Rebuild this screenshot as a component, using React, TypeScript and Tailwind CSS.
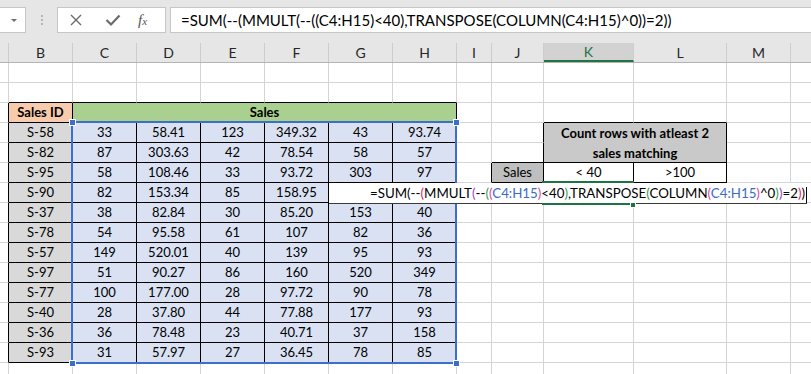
import React from "react"

const FONT = { fontFamily: "Lato, 'Open Sans', sans-serif" }

const COL_LETTERS = ["", "B", "C", "D", "E", "F", "G", "H", "I", "J", "K", "L", "M", ""]
const COL_WIDTHS = [9, 64, 64, 64, 64, 64, 64, 64, 35, 52, 90, 93, 64, 40]

// Sales data, rows 4-15 (C..H)
const SALES: [string, string[]][] = [
  ["S-58", ["33", "58.41", "123", "349.32", "43", "93.74"]],
  ["S-82", ["87", "303.63", "42", "78.54", "58", "57"]],
  ["S-95", ["58", "108.46", "33", "93.72", "303", "97"]],
  ["S-90", ["82", "153.34", "85", "158.95", "", ""]],
  ["S-37", ["38", "82.84", "30", "85.20", "153", "40"]],
  ["S-78", ["54", "95.58", "61", "107", "82", "36"]],
  ["S-57", ["149", "520.01", "40", "139", "95", "93"]],
  ["S-97", ["51", "90.27", "86", "160", "520", "349"]],
  ["S-77", ["100", "177.00", "28", "97.72", "90", "78"]],
  ["S-40", ["28", "37.80", "44", "77.88", "177", "93"]],
  ["S-36", ["36", "78.48", "23", "40.71", "37", "158"]],
  ["S-93", ["31", "57.97", "27", "36.45", "78", "85"]],
]

const ROWS = 16
const NCOLS = COL_WIDTHS.length

// cells with black border
function boxed(r: number, c: number) {
  if (r >= 3 && r <= 15 && c >= 1 && c <= 7) return true
  if (r >= 4 && r <= 5 && c >= 10 && c <= 11) return true
  if (r === 6 && c >= 9 && c <= 11) return true
  return false
}

// cells hidden under a merged cell
function covered(r: number, c: number) {
  if (r === 3 && c >= 3 && c <= 7) return true
  if (r === 4 && c === 11) return true
  if (r === 5 && (c === 10 || c === 11)) return true
  return false
}

type Cell = { text?: React.ReactNode; bg?: string; bold?: boolean; span?: string }

function cellInfo(r: number, c: number): Cell {
  if (r === 3 && c === 1) return { text: "Sales ID", bg: "bg-[#f8cbad]", bold: true }
  if (r === 3 && c === 2) return { text: "Sales", bg: "bg-[#a9d08e]", bold: true, span: "col-span-6" }
  if (r >= 4 && r <= 15 && c === 1) return { text: SALES[r - 4][0], bg: "bg-[#d9d9d9]" }
  if (r >= 4 && r <= 15 && c >= 2 && c <= 7) return { text: SALES[r - 4][1][c - 2], bg: "bg-[#d9e1f2]" }
  if (r === 4 && c === 10)
    return {
      text: (
        <span className="leading-[20px] text-center">
          Count rows with atleast 2
          <br />
          sales matching
        </span>
      ),
      bg: "bg-[#c9c9c9]",
      bold: true,
      span: "col-span-2 row-span-2",
    }
  if (r === 6 && c === 9) return { text: "Sales", bg: "bg-[#bfbfbf]" }
  if (r === 6 && c === 10) return { text: "< 40", bg: "bg-white" }
  if (r === 6 && c === 11) return { text: ">100", bg: "bg-white" }
  return { bg: "bg-white" }
}

const K = "#000000"
const RED = "#e0245e"
const PURPLE = "#9a3fc0"
const GREEN = "#2ea04a"
const MAGENTA = "#dd3fae"
const BLUE = "#3a6ac8"

const EDIT_PARTS: [string, string][] = [
  ["=SUM(--", K],
  ["(", RED],
  ["MMULT", K],
  ["(", PURPLE],
  ["--", K],
  ["(", GREEN],
  ["(", MAGENTA],
  ["C4:H15", BLUE],
  [")", MAGENTA],
  ["<40", K],
  [")", GREEN],
  [",TRANSPOSE", K],
  ["(", GREEN],
  ["COLUMN", K],
  ["(", MAGENTA],
  ["C4:H15", BLUE],
  [")", MAGENTA],
  ["^0", K],
  [")", GREEN],
  [")", PURPLE],
  ["=2", K],
  [")", RED],
  [")", K],
]

const FORMULA = "=SUM(--(MMULT(--((C4:H15)<40),TRANSPOSE(COLUMN(C4:H15)^0))=2))"

function FormulaBar() {
  return (
    <div className="h-[43px] bg-[#e6e6e6] pt-[7px] flex items-start">
      {/* name box, cut off on the left */}
      <div className="w-[26px] h-[26px] bg-white border-y border-r border-[#c6c6c6] flex items-center justify-end pr-[8px]">
        <div className="w-0 h-0 border-l-[3px] border-r-[3px] border-t-[3px] border-l-transparent border-r-transparent border-t-[#6f6f6f]" />
      </div>
      <div className="w-[31px] h-[26px] flex flex-col items-center justify-center gap-[2px] pl-[1px]">
        <div className="w-[2px] h-[2px] bg-[#b5b5b5]" />
        <div className="w-[2px] h-[2px] bg-[#b5b5b5]" />
        <div className="w-[2px] h-[2px] bg-[#b5b5b5]" />
      </div>
      <div className="w-[109px] h-[26px] bg-white border border-[#c6c6c6] flex items-center">
        <svg width="14" height="14" viewBox="0 0 14 14" className="ml-[11px]">
          <path d="M2 2 L12 12 M12 2 L2 12" stroke="#6b6b6b" strokeWidth="1.4" />
        </svg>
        <svg width="16" height="14" viewBox="0 0 16 14" className="ml-[22px]">
          <path d="M1.5 7 L6 11.5 L14.5 2.5" fill="none" stroke="#6b6b6b" strokeWidth="2.2" />
        </svg>
        <span
          className="ml-[17px] text-[#555] italic text-[15px] leading-none"
          style={{ fontFamily: "'Liberation Serif', serif" }}
        >
          f<span className="text-[11px]">x</span>
        </span>
      </div>
      <div
        className="ml-[4px] flex-1 h-[26px] bg-white border-y border-l border-[#c6c6c6] flex items-center pl-[10px] text-[15px] text-black whitespace-nowrap"
        style={FONT}
      >
        {FORMULA}
      </div>
    </div>
  )
}

function ColumnHeaders() {
  return (
    <div className="flex h-[20px] bg-[#e6e6e6] border-b border-[#b4b4b4]" style={FONT}>
      {COL_WIDTHS.map((w, i) => {
        const active = i === 10
        return (
          <div
            key={i}
            style={{ width: w }}
            className={`shrink-0 h-full flex items-center justify-center text-[14px] border-r border-[#cdcdcd] ${
              active ? "bg-[#d2d2d2] text-[#217346] border-b-2 border-b-[#217346]" : "text-[#262626]"
            }`}
          >
            {COL_LETTERS[i]}
          </div>
        )
      })}
    </div>
  )
}

function Sheet() {
  const cells: React.ReactNode[] = []
  for (let r = 1; r <= ROWS; r++) {
    for (let c = 0; c < NCOLS; c++) {
      if (covered(r, c)) continue
      const info = cellInfo(r, c)
      const rightBlack = boxed(r, c) || boxed(r, c + 1)
      const bottomBlack = boxed(r, c) || boxed(r + 1, c)
      cells.push(
        <div
          key={`${r}-${c}`}
          className={`flex items-center justify-center border-r border-b overflow-hidden whitespace-nowrap text-[13px] text-black pt-[1px] ${
            info.bg
          } ${info.span ?? ""} ${info.bold ? "font-bold" : ""} ${rightBlack ? "border-r-black" : "border-r-[#d4d4d4]"} ${
            bottomBlack ? "border-b-black" : "border-b-[#d4d4d4]"
          }`}
        >
          {info.text}
        </div>
      )
    }
  }

  return (
    <div className="relative" style={FONT}>
      <div className="grid grid-cols-[9px_64px_64px_64px_64px_64px_64px_64px_35px_52px_90px_93px_64px_40px] auto-rows-[20px]">
        {cells}
      </div>

      {/* referenced range highlight C4:H15 */}
      <div className="absolute left-[71px] top-[58px] w-[386px] h-[243px] border-2 border-[#3c6fc7]" />
      <div className="absolute left-[69px] top-[56px] w-[7px] h-[7px] bg-[#3c6fc7] border border-white" />
      <div className="absolute left-[453px] top-[56px] w-[7px] h-[7px] bg-[#3c6fc7] border border-white" />
      <div className="absolute left-[69px] top-[297px] w-[7px] h-[7px] bg-[#3c6fc7] border border-white" />
      <div className="absolute left-[453px] top-[297px] w-[7px] h-[7px] bg-[#3c6fc7] border border-white" />

      {/* in-cell editor on K7 */}
      <div
        className="absolute left-[329px] top-[120px] w-[478px] h-[21px] bg-white border-b border-[#3a3a3a] pl-[41px] pt-[1px] text-[13.3px] leading-[19px] whitespace-nowrap"
        style={FONT}
      >
        {EDIT_PARTS.map(([t, col], i) => (
          <span key={i} style={{ color: col }}>
            {t}
          </span>
        ))}
        <span className="inline-block align-middle ml-[1px] w-px h-[16px] bg-black" />
      </div>

      {/* active cell K7 */}
      <div className="absolute left-[542px] top-[118px] w-[92px] h-[2px] bg-[#217346]" />
      <div className="absolute left-[542px] top-[140px] w-[92px] h-[2px] bg-[#217346]" />
      <div className="absolute left-[630px] top-[139px] w-[6px] h-[6px] bg-[#217346] border border-white" />
    </div>
  )
}

export default function App() {
  return (
    <div className="w-[811px] h-[374px] overflow-hidden bg-white">
      <FormulaBar />
      <ColumnHeaders />
      <Sheet />
    </div>
  )
}
